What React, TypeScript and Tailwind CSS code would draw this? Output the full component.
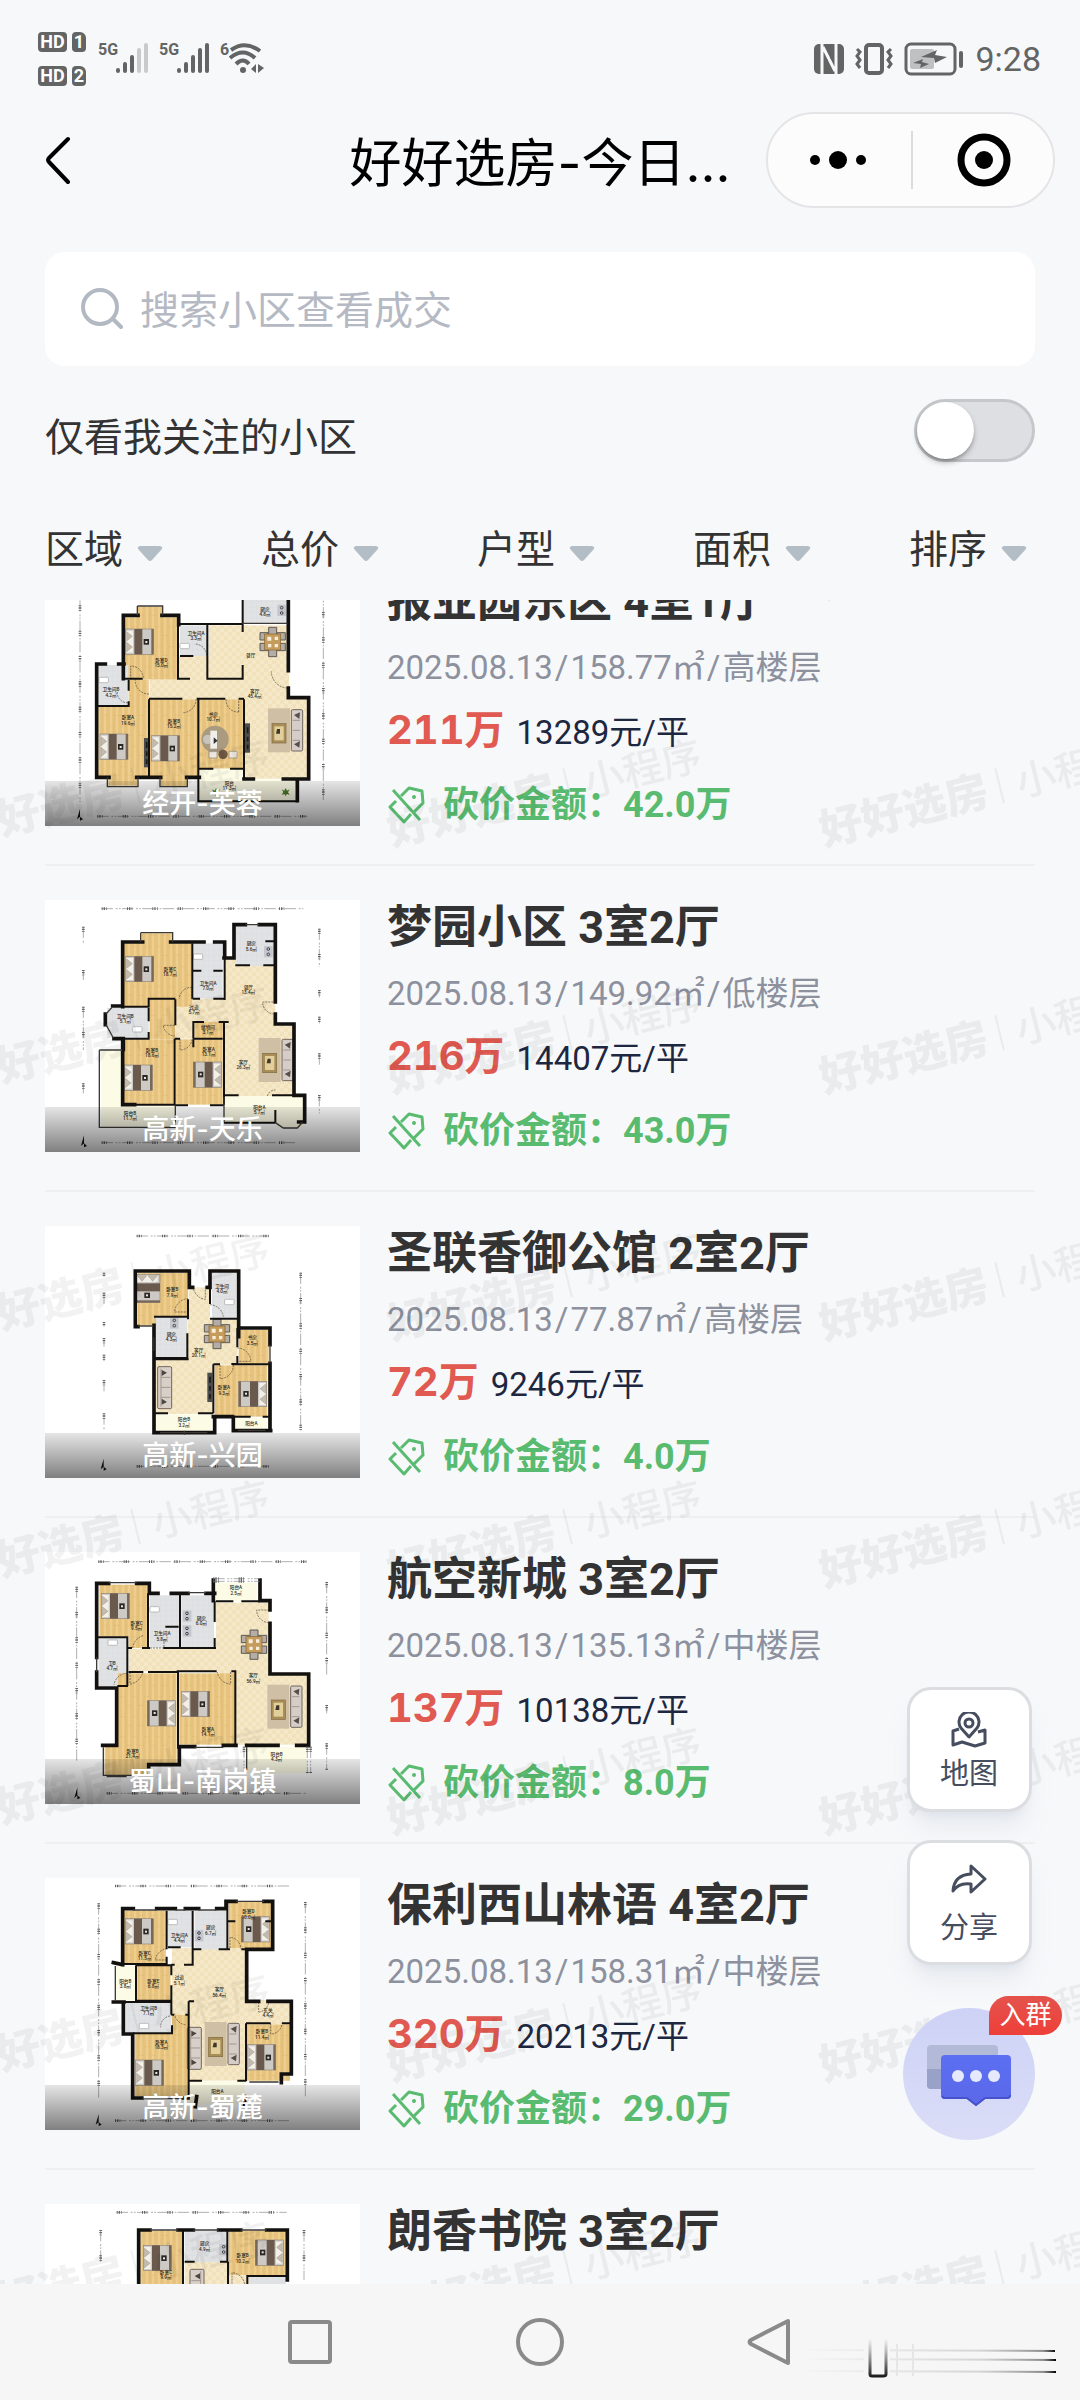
import {useLayoutEffect, useRef, useState} from 'react';

type RoomKind = 'wood' | 'tile' | 'bath' | 'balcony';
type FurnitureKind = 'bed' | 'sofa' | 'dining' | 'rug' | 'toilet' | 'tv' | 'desk' | 'stove' | 'plant';

interface Plan {
    top: number; // origem vertical do viewBox
    rooms: [RoomKind, number, number, number, number][];
    walls: string;
    inner: string;
    thin?: string;
    doors: string;
    furniture: [FurnitureKind, number, number, number?][];
    labels: [string, string, number, number][];
    dims: string;
    north?: [number, number];
}

interface Listing {
    id: number;
    name: string;
    area: string;
    date?: string;
    size?: string;
    floor?: string;
    price?: string;
    unitPrice?: string;
    bargain?: string;
    plan: Plan;
}

const roomFill: Record<RoomKind, string> = {
    wood: 'url(#wood)',
    tile: 'url(#tile)',
    bath: 'url(#bath)',
    balcony: '#fcfbe6',
};

const listings: Listing[] = [
    {
        id: 1,
        name: '报业园东区 4室1厅',
        area: '经开-芙蓉',
        date: '2025.08.13',
        size: '158.77㎡',
        floor: '高楼层',
        price: '211万',
        unitPrice: '13289元/平',
        bargain: '42.0万',
        plan: {
            top: -18,
            rooms: [
                ['tile', 449, 230, 418, 128], ['tile', 626, 136, 238, 222], ['tile', 732, 270, 130, 90],
                ['tile', 732, 356, 192, 240], ['tile', 536, 228, 90, 72], ['bath', 728, 40, 136, 92],
                ['wood', 372, 112, 160, 186], ['wood', 412, 80, 76, 36], ['bath', 540, 136, 84, 92],
                ['bath', 295, 255, 90, 122], ['wood', 386, 298, 60, 82], ['wood', 295, 378, 150, 212],
                ['wood', 325, 585, 86, 32], ['wood', 449, 358, 146, 232], ['wood', 482, 586, 80, 32],
                ['wood', 597, 358, 135, 208], ['balcony', 597, 566, 135, 98], ['balcony', 732, 598, 158, 66],
            ],
            walls: 'M370 296V106H414M486 106H536V134M865 40V272M865 324V353H926V597H850M760 597H732M290 592V252H316M356 252H372M290 592H327M410 592H482M560 592H598M892 600V662',
            inner: 'M536 132H728M728 40V156M728 255V296H622V134M622 228V296M540 228H580M534 134V296H570M386 300V332M386 364V378H292M372 296H428M447 358V590M447 356H547M590 356H676M716 356H732M595 358V664H892M732 358V597M597 566H640M690 566H732',
            thin: 'M412 78H488V106M412 78V106M322 592V620H414V592M480 592V620H562V592M727 130H862',
            doors: 'M392 298V258A38 38 0 0 1 430 296M447 342A40 40 0 0 1 406 298M620 226A36 36 0 0 0 584 192M862 324A50 50 0 0 1 814 274M588 358A40 40 0 0 1 548 398M716 396V358M716 396A36 36 0 0 1 678 358M384 368A30 30 0 0 1 352 336',
            furniture: [
                ['bed', 377, 147], ['bed', 300, 462], ['bed', 455, 467], ['dining', 818, 186], ['rug', 804, 385],
                ['toilet', 540, 190], ['toilet', 297, 292], ['tv', 735, 430], ['tv', 432, 474], ['desk', 645, 478],
                ['stove', 842, 78], ['plant', 857, 636], ['plant', 648, 636],
            ],
            labels: [
                ['厨房', '4.8㎡', 795, 92], ['卫生间A', '3.3㎡', 588, 165], ['卧室D', '15.0㎡', 484, 246],
                ['餐厅', '', 752, 230], ['卫生间B', '4.2㎡', 333, 334], ['客厅', '45.4㎡', 764, 338],
                ['卧室A', '19.6㎡', 384, 418], ['卧室B', '15.2㎡', 522, 428], ['书房', '10.7㎡', 640, 408],
                ['阳台', '11.3㎡', 688, 614],
            ],
            dims: 'M240 0V670M970 20V660M292 709H922',
            north: [240, 704],
        },
    },
    {
        id: 2,
        name: '梦园小区 3室2厅',
        area: '高新-天乐',
        date: '2025.08.13',
        size: '149.92㎡',
        floor: '低楼层',
        price: '216万',
        unitPrice: '14407元/平',
        bargain: '43.0万',
        plan: {
            top: 60,
            rooms: [
                ['tile', 526, 356, 300, 120], ['tile', 672, 235, 150, 250], ['tile', 672, 436, 208, 212],
                ['wood', 372, 190, 204, 190], ['wood', 424, 160, 92, 34], ['bath', 580, 190, 88, 166],
                ['bath', 706, 136, 116, 122], ['bath', 322, 384, 124, 90], ['wood', 449, 358, 76, 120],
                ['wood', 372, 478, 152, 194], ['wood', 584, 426, 84, 50], ['wood', 528, 478, 140, 196],
                ['balcony', 304, 512, 62, 232], ['balcony', 304, 676, 222, 68], ['balcony', 672, 648, 240, 78],
                ['balcony', 830, 690, 80, 52],
            ],
            walls: 'M368 380V186H428M512 186H612M644 186H674V234M702 234V134H736M778 134H826V366M826 402V432H882V646H914V726H896M338 378H368M342 476H370V508M368 476V674H404M316 402V434M672 234H702M702 168V210',
            inner: 'M577 190V356M580 272H604M640 272H668M674 234V360M368 380H446V356H526M526 358V436M446 384V424M446 456V476H370M524 476V676M578 356H600M640 356H672M580 476V426H612M656 426H686M524 476H540M580 476H668M672 426V674M524 676H564M630 676H672M368 674H524M672 646H716M816 646H880M706 256H750M790 256H822M796 184H822M826 690V728M672 728H826M580 478V502',
            thin: 'M422 158H518V186M422 158V186M298 510V742H526V676M298 510H366M318 402L338 380M318 434L340 474M826 728L850 744H892L908 726M736 134H778M672 650V728',
            doors: 'M576 358V322A36 36 0 0 0 538 356M820 366H788A36 36 0 0 0 820 402M524 436H490A36 36 0 0 0 524 468M540 476V510A36 36 0 0 0 576 478M802 648A24 24 0 0 1 826 630',
            furniture: [
                ['bed', 377, 229], ['bed', 373, 555], ['bed', 664, 622, 180], ['toilet', 580, 222], ['toilet', 398, 440],
                ['rug', 776, 474], ['stove', 802, 202],
            ],
            labels: [
                ['厨房', '5.6㎡', 754, 196], ['卧室C', '18.7㎡', 510, 272], ['卫生间A', '7.0㎡', 624, 314],
                ['餐厅', '13.4㎡', 745, 326], ['过道', '5.7㎡', 582, 386], ['卫生间B', '5.1㎡', 376, 414],
                ['储物间', '3.1㎡', 624, 446], ['卧室B', '18.6㎡', 456, 516], ['卧室A', '13.1㎡', 626, 512],
                ['客厅', '26.3㎡', 730, 552], ['阳台B', '11.7㎡', 390, 704], ['阳台A', '5.7㎡', 778, 686],
            ],
            dims: 'M305 86H910M250 140V190M250 270V300M250 380V510M250 610V640M958 146V260M958 330V352M958 410V430M958 520V560M958 645V700M305 788H885',
            north: [252, 784],
        },
    },
    {
        id: 3,
        name: '圣联香御公馆 2室2厅',
        area: '高新-兴园',
        date: '2025.08.13',
        size: '77.87㎡',
        floor: '高楼层',
        price: '72万',
        unitPrice: '9246元/平',
        bargain: '4.0万',
        plan: {
            top: 78,
            rooms: [
                ['tile', 566, 262, 64, 380], ['tile', 468, 478, 170, 164], ['tile', 564, 360, 148, 134],
                ['wood', 414, 218, 150, 130], ['wood', 414, 340, 54, 36], ['bath', 468, 352, 94, 120],
                ['bath', 636, 218, 74, 136], ['wood', 716, 390, 90, 102], ['wood', 644, 496, 158, 154],
                ['balcony', 468, 644, 168, 54], ['balcony', 708, 654, 92, 42],
            ],
            walls: 'M406 380V213H568V262M406 380H414M568 262H578M622 262H630V213H716V384H810V434M716 384V410M810 490V692M462 376V698H480M640 650H696M462 698H644V652M700 652V692H812M462 376V412M652 213H660',
            inner: 'M462 350H566M564 298V358M562 400V474H462M630 262V312M630 356H712M712 384V442M712 468V492H694M640 493H660M640 493V640M462 478H566M462 640H504M594 640H640M700 650H752M788 650H806M696 493H806',
            thin: 'M414 378H460M459 412V452M466 412V452M480 698H622M553 692V704M810 434V490M714 691H796',
            doors: 'M566 336H524A42 42 0 0 1 564 296M616 260V298A40 40 0 0 1 580 262M630 314A42 42 0 0 1 670 350M712 444A40 40 0 0 1 752 484H714M660 495V536A40 40 0 0 0 700 495',
            furniture: [
                ['bed', 480, 224, 90], ['bed', 800, 620, 180], ['dining', 651, 402], ['sofa', 515, 626, 180],
                ['tv', 622, 518], ['toilet', 674, 298], ['stove', 520, 356],
            ],
            labels: [
                ['卧室B', '7.9㎡', 517, 274], ['卫生间', '4.0㎡', 666, 264], ['厨房', '4.3㎡', 514, 408],
                ['客厅', '20.1㎡', 596, 456], ['书房', '3.5㎡', 757, 418], ['卧室A', '9.3㎡', 672, 568],
                ['阳台B', '3.2㎡', 552, 664], ['阳台A', '', 754, 676],
            ],
            dims: 'M410 108H806M312 218V230M312 278V314M312 366V380M312 414V440M312 464V484M312 540V576M312 640V692M902 218V692M410 799H806',
            north: [311, 794],
        },
    },
    {
        id: 4,
        name: '航空新城 3室2厅',
        area: '蜀山-南岗镇',
        date: '2025.08.13',
        size: '135.13㎡',
        floor: '中楼层',
        price: '137万',
        unitPrice: '10138元/平',
        bargain: '8.0万',
        plan: {
            top: 66,
            rooms: [
                ['tile', 386, 356, 424, 68], ['tile', 648, 218, 158, 426], ['tile', 706, 436, 216, 208],
                ['wood', 298, 164, 144, 156], ['wood', 386, 316, 58, 38], ['bath', 449, 196, 88, 158],
                ['bath', 544, 196, 98, 158], ['bath', 296, 324, 88, 144], ['wood', 354, 430, 176, 276],
                ['wood', 314, 650, 130, 86], ['wood', 538, 430, 168, 214], ['balcony', 648, 158, 122, 56],
                ['balcony', 742, 650, 178, 80],
            ],
            walls: 'M326 160H290V382M290 426V474H350V646H308M410 160H448V190H474M514 190H564M618 190H644M780 150V212H810V240M810 280V432H926V646H890M708 646H670M584 650H538V704H446V710M640 150V212M834 646H740',
            inner: 'M290 322H382V468M444 190V354M384 354H396M426 354H450M490 354H648M540 190V354M644 212V276M644 324V354M496 290H536M386 426H430M444 426H534V656M530 424H650M694 424H706V646M648 214H700M724 214H780M384 468H352',
            thin: 'M326 158H410M310 652V736H446M290 382V426M564 188H618M584 652H670M320 740H380M740 650V720',
            doors: 'M398 354A44 44 0 0 1 432 316M390 426V462A44 44 0 0 0 428 426M382 430A40 40 0 0 0 342 464M808 240H770A38 38 0 0 0 804 278M692 426V462A42 42 0 0 1 652 426M450 354H492V326',
            furniture: [
                ['bed', 304, 190], ['bed', 526, 588, 180], ['bed', 545, 484], ['dining', 762, 344], ['rug', 802, 464],
                ['toilet', 450, 230], ['toilet', 324, 330], ['stove', 558, 245], ['stove', 558, 290],
            ],
            labels: [
                ['阳台A', '2.5㎡', 708, 178], ['厨房', '6.0㎡', 604, 270], ['卧室C', '9.5㎡', 410, 284],
                ['卫生间A', '5.8㎡', 486, 316], ['卫B', '4.7㎡', 336, 404], ['客厅', '56.9㎡', 760, 442],
                ['卧室A', '14.1㎡', 624, 602], ['卧室B', '21.4㎡', 398, 668], ['阳台B', '4.3㎡', 830, 678],
            ],
            dims: 'M295 95H920M230 170V700M980 156V440M980 525V550M980 640V720M320 790H920M640 146H780M640 154H780M732 650V730M922 650V730M932 650V730',
            north: [232, 790],
        },
    },
    {
        id: 5,
        name: '保利西山林语 4室2厅',
        area: '高新-蜀麓',
        date: '2025.08.13',
        size: '158.31㎡',
        floor: '中楼层',
        price: '320万',
        unitPrice: '20213元/平',
        bargain: '29.0万',
        plan: {
            top: 54,
            rooms: [
                ['tile', 516, 264, 220, 160], ['tile', 568, 420, 302, 242], ['tile', 516, 420, 52, 44],
                ['wood', 372, 152, 126, 160], ['bath', 504, 152, 72, 110], ['bath', 584, 152, 94, 116],
                ['wood', 686, 126, 128, 138], ['balcony', 346, 318, 62, 104], ['wood', 412, 318, 100, 104],
                ['bath', 376, 428, 138, 90], ['wood', 404, 520, 160, 188], ['wood', 516, 464, 48, 60],
                ['wood', 740, 494, 130, 168], ['balcony', 568, 664, 166, 70],
            ],
            walls: 'M400 146H368V314M370 520V428M370 522H398V714H426M470 146H526M556 146H596M650 146H678V124H708M792 124H818V268H740V424H776M804 424H874V642H844V668M548 714H564M368 314L340 308M340 426H372M590 710L586 740M734 734V710',
            inner: 'M500 152V268M500 290V312H370M578 152V268M504 262H542M578 268H604M656 268H690M682 124V268M682 184H706M796 184H816M724 268H740M408 316V422H516M408 316H514V346M514 376V464M552 314H578V262M514 314H524M514 464H522M556 464H564M566 424V664M566 424H582M372 426H514M400 520H516V496M738 490H812M846 490H872M738 490V664M566 662H606M712 662H738M566 664V714',
            thin: 'M400 150H470M526 150H556M596 150H650M708 124H792M748 666H836M426 716H548M346 318V424',
            doors: 'M500 300H466A40 40 0 0 1 500 266M510 468A32 32 0 0 0 482 502M524 460A36 36 0 0 0 556 494M690 264V232A34 34 0 0 1 722 266M776 426V456M776 456A32 32 0 0 0 806 426M812 490V522A34 34 0 0 0 846 490',
            furniture: [
                ['bed', 376, 176], ['bed', 808, 246, 180], ['bed', 407, 600], ['bed', 743, 554], ['toilet', 504, 178],
                ['toilet', 418, 490], ['sofa', 604, 628, 180], ['rug', 614, 486], ['stove', 594, 214],
            ],
            labels: [
                ['卧室D', '10.0㎡', 745, 160], ['厨房', '6.7㎡', 632, 208], ['卫生间A', '4.4㎡', 538, 230],
                ['卧室C', '11.5㎡', 434, 284], ['阳台B', '3.8㎡', 376, 368], ['卧室E', '6.8㎡', 460, 368],
                ['过道', '5.1㎡', 538, 358], ['客厅', '56.4㎡', 658, 394], ['卫生间B', '7.1㎡', 446, 450],
                ['玄关', '4.4㎡', 804, 456], ['卧室A', '18.3㎡', 484, 552], ['卧室B', '11.4㎡', 786, 520],
                ['阳台A', '', 652, 698],
            ],
            dims: 'M345 78H872M296 130V720M916 126V716M345 782H872',
            north: [296, 780],
        },
    },
    {
        id: 6,
        name: '朗香书院 3室2厅',
        area: '',
        plan: {
            top: 72,
            rooms: [
                ['wood', 421, 152, 126, 300], ['bath', 554, 152, 126, 94], ['tile', 554, 246, 130, 200],
                ['wood', 686, 152, 172, 134], ['bath', 746, 288, 112, 100], ['tile', 686, 286, 60, 140],
            ],
            walls: 'M450 150H416V400M534 150H580M656 150H722M800 150H862V300',
            inner: 'M549 150V400M554 245H584M660 245H682V150M684 245V400M742 400V288H862',
            thin: 'M450 150H534M580 150H656M722 150H800',
            doors: 'M696 320V278A40 40 0 0 1 734 316',
            furniture: [['bed', 430, 196], ['bed', 850, 256, 180], ['stove', 668, 195], ['sofa', 570, 268]],
            labels: [['厨房', '4.9㎡', 614, 196], ['卧室B', '10.2㎡', 728, 232], ['卧室C', '9.9㎡', 498, 282]],
            dims: 'M350 97H860M302 150V250M912 150V300',
        },
    },
];

function Furniture({kind, x, y, rotate = 0}: {kind: FurnitureKind; x: number; y: number; rotate?: number}) {
    return (
        <g transform={`translate(${x} ${y}) rotate(${rotate})`}>
            {kind === 'bed' && (
                <>
                    <rect width="84" height="76" fill="#cdc9c4" stroke="#8f8579" strokeWidth="2"/>
                    <rect x="2" y="5" width="20" height="66" fill="#f3f0ea"/>
                    <path d="M3 8L20 22L3 36ZM3 40L20 54L3 68Z" fill="#c4bbae" stroke="#857a6b"/>
                    <rect x="26" width="24" height="76" fill="#6a5a4d"/>
                    <rect x="77" width="7" height="76" fill="#78685a"/>
                    <rect x="54" y="30" width="16" height="17" fill="#2a2725"/>
                    <rect x="59" y="36" width="6" height="6" fill="#e9e6e1"/>
                </>
            )}
            {kind === 'sofa' && (
                <>
                    <rect width="42" height="126" rx="4" fill="#d8cfc8" stroke="#71675e" strokeWidth="3"/>
                    <path d="M4 34H32M4 64H32M4 94H32M32 6V120" stroke="#877b71" strokeWidth="2" fill="none"/>
                    <path d="M30 12L14 20L30 30ZM30 98L14 108L30 116Z" fill="#4c4540"/>
                </>
            )}
            {kind === 'rug' && (
                <>
                    <rect width="66" height="132" fill="#cfbfa5"/>
                    <rect x="12" y="46" width="42" height="58" fill="#a88d57" stroke="#7f6a3f" strokeWidth="2"/>
                    <rect x="19" y="54" width="28" height="42" fill="#e2cf9b"/>
                    <path d="M27 62H36V76H24Z" fill="#3f3728"/>
                    <rect x="70" y="4" width="34" height="124" rx="4" fill="#d6cdc8" stroke="#71675e" strokeWidth="3"/>
                    <path d="M74 36H96M74 66H96M74 96H96" stroke="#877b71" strokeWidth="2"/>
                    <path d="M96 12L78 20L94 32ZM96 98L78 108L94 118Z" fill="#574e49"/>
                </>
            )}
            {kind === 'dining' && (
                <>
                    <path d="M-12 -44H12V44H-12ZM-38 -28H-14V-6H-38ZM14 -28H38V-6H14ZM-38 4H-14V26H-38ZM14 4H38V26H14Z" fill="#b3ada6" stroke="#5f5953" strokeWidth="3"/>
                    <rect x="-24" y="-24" width="48" height="48" fill="#c59c5c" stroke="#836433" strokeWidth="2"/>
                    <path d="M-16 -16H-4V-4H-16ZM6 -16H16V-6H6ZM-14 6H-4V16H-14ZM6 6H16V16H6Z" fill="#f6eddc"/>
                </>
            )}
            {kind === 'toilet' && <rect width="28" height="16" rx="2" fill="#fff" stroke="#a3a3a3" strokeWidth="2"/>}
            {kind === 'tv' && (
                <>
                    <rect width="15" height="88" fill="#4d4d4d"/>
                    <path d="M8 12V30M8 40V54M8 64V78" stroke="#1b1b1b" strokeWidth="5"/>
                </>
            )}
            {kind === 'desk' && (
                <>
                    <circle r="41" fill="#a99a80"/>
                    <circle cx="-22" r="14" fill="#c8c4bd"/>
                    <rect x="-14" y="-26" width="20" height="54" fill="#f1efea"/>
                    <path d="M-4 -6L8 4L-4 14Z" fill="#333"/>
                    <path d="M-18 36H6V56H-18ZM42 36H66V56H42Z" fill="#ece7df" stroke="#8b8378" strokeWidth="2"/>
                    <circle cx="24" cy="45" r="14" fill="#6f5844"/>
                </>
            )}
            {kind === 'stove' && (
                <>
                    <rect x="-10" y="-4" width="26" height="34" fill="#c3c6ce"/>
                    <circle cx="3" cy="5" r="4" fill="none" stroke="#444" strokeWidth="3"/>
                    <circle cx="3" cy="21" r="4" fill="none" stroke="#444" strokeWidth="3"/>
                </>
            )}
            {kind === 'plant' && (
                <path d="M0 -12L4 -4L12 -8L7 1L12 9L3 6L0 13L-4 6L-12 9L-7 0L-12 -8L-4 -4Z" fill="#4f7a26"/>
            )}
        </g>
    );
}

function FloorPlan({plan}: {plan: Plan}) {
    return (
        <svg viewBox={`135 ${plan.top} 945 756`} className="block w-full h-full" aria-hidden="true">
            {plan.rooms.map(([kind, x, y, w, h], i) => (
                <rect key={i} x={x} y={y} width={w} height={h} fill={roomFill[kind]}/>
            ))}
            <path d={plan.doors} fill="none" stroke="#4c4637" strokeWidth="2" strokeDasharray="6 3"/>
            {plan.furniture.map(([kind, x, y, rotate], i) => (
                <Furniture key={i} kind={kind} x={x} y={y} rotate={rotate}/>
            ))}
            <path d={plan.walls} fill="none" stroke="#12110f" strokeWidth="11" strokeLinecap="square"/>
            <path d={plan.inner} fill="none" stroke="#12110f" strokeWidth="6"/>
            {plan.thin && <path d={plan.thin} fill="none" stroke="#3c3b38" strokeWidth="4"/>}
            <path d={plan.dims} fill="none" stroke="#888" strokeWidth="2" strokeDasharray="34 8 6 4 5 4"/>
            <path d={plan.dims} fill="none" stroke="#666" strokeWidth="8" strokeDasharray="3 3 4 4 2 60"/>
            {plan.labels.map(([name, size, x, y], i) => (
                <text key={i} x={x} y={y} textAnchor="middle" fontSize="14" fontWeight="500" fill="#2d2920">
                    {name}
                    {size && <tspan x={x} dy="16">{size}</tspan>}
                </text>
            ))}
            {plan.north && (
                <path
                    d="M0 18V-18L-9 14L0 6L9 14Z"
                    transform={`translate(${plan.north[0]} ${plan.north[1]})`}
                    fill="#161616"
                />
            )}
        </svg>
    );
}

// Texturas compartilhadas por todas as plantas
function PlanTextures() {
    return (
        <svg className="absolute w-0 h-0" aria-hidden="true">
            <defs>
                <pattern id="wood" width="36" height="60" patternUnits="userSpaceOnUse">
                    <rect width="36" height="60" fill="#e6c27c"/>
                    <path d="M9 0V60M27 0V60" stroke="#eece8e" strokeWidth="7"/>
                    <path d="M18 0V60M0 20H18M18 46H36" stroke="#dab36a" strokeWidth="1"/>
                </pattern>
                <pattern id="tile" width="24" height="24" patternUnits="userSpaceOnUse">
                    <rect width="24" height="24" fill="#f4e8c8"/>
                    <path d="M0 0H12V12H0ZM12 12H24V24H12Z" fill="#f2e2bc"/>
                </pattern>
                <pattern id="bath" width="16" height="16" patternUnits="userSpaceOnUse">
                    <rect width="16" height="16" fill="#e0e2e4"/>
                    <path d="M0 0H16M0 0V16" stroke="#d4d6d9" strokeWidth="1"/>
                </pattern>
            </defs>
        </svg>
    );
}

function SignalBars({weak = false}: {weak?: boolean}) {
    const faded = weak ? '#c9cacb' : '#636464';
    return (
        <svg viewBox="0 0 33 32" className="w-[33px] h-8" fill="none" strokeWidth="4" strokeLinecap="round">
            <path d="M2 28V29M9 22V29M16 15V29" stroke="#636464"/>
            <path d="M23 8V29M30 3V29" stroke={faded}/>
        </svg>
    );
}

function HdBadge({sim}: {sim: string}) {
    return (
        <div className="flex gap-[5px] text-white font-bold text-lg leading-5">
            <span className="w-[29px] h-5 rounded-sm bg-[#636464] text-center">HD</span>
            <span className="w-[14px] h-5 rounded-sm rounded-tr-md bg-[#636464] text-center">{sim}</span>
        </div>
    );
}

function StatusBar() {
    return (
        <div className="flex items-start justify-between h-28 pl-[38px] pr-[39px] pt-8 text-[#636464]">
            <div className="flex items-start">
                <div className="flex flex-col gap-[14px]">
                    <HdBadge sim="1"/>
                    <HdBadge sim="2"/>
                </div>
                <div className="flex items-start pt-[10px] pl-3 font-bold text-base leading-4">
                    <span className="w-[18px]">5G</span>
                    <SignalBars weak/>
                    <span className="w-[18px] ml-[10px]">5G</span>
                    <SignalBars/>
                    <span className="w-[9px] ml-[10px]">6</span>
                    <svg viewBox="0 0 36 32" className="w-9 h-8" fill="none" stroke="#636464" strokeWidth="4">
                        <path d="M2 8Q16 -2 31 9M1 16Q14 5 26 16M7 22Q14 15 20 22"/>
                        <circle cx="14" cy="28" r="3" fill="#636464" stroke="none"/>
                        <path d="M22 27L27 22V31ZM29 22L35 26L29 31Z" fill="#636464" stroke="none"/>
                    </svg>
                </div>
            </div>
            <div className="flex items-center gap-[11px] pt-[10px]">
                <svg viewBox="0 0 30 32" className="w-[30px] h-8">
                    <rect y="1" width="30" height="30" rx="5" fill="#636464"/>
                    <path d="M8 1V31M9 4L21 28M22 1V31" stroke="#f7f8fa" strokeWidth="3" fill="none"/>
                    <path d="M12 16V29M18 3V16" stroke="#636464" strokeWidth="3"/>
                </svg>
                <svg viewBox="0 0 38 32" className="w-[38px] h-8" fill="none" stroke="#636464" strokeWidth="3">
                    <rect x="11" y="2" width="16" height="28" rx="3" strokeWidth="4"/>
                    <path d="M2 6L5 9L2 13L5 17L2 21L5 25M36 6L33 9L36 13L33 17L36 21L33 25"/>
                </svg>
                <svg viewBox="0 0 60 34" className="w-[60px] h-[34px]">
                    <rect x="2" y="2" width="49" height="30" rx="5" fill="none" stroke="#636464" strokeWidth="3"/>
                    <rect x="6" y="7" width="24" height="20" rx="2" fill="#bfc0c1"/>
                    <path d="M17 15L33 8L31 13L43 15L31 21L30 16ZM9 21L19 17L18 20L25 22L16 26L17 22Z" fill="#636464"/>
                    <path d="M57 11V24" stroke="#636464" strokeWidth="4" strokeLinecap="round"/>
                </svg>
                <span className="text-[34px] leading-8">9:28</span>
            </div>
        </div>
    );
}

function NavBar() {
    return (
        <header className="grid grid-cols-[1fr_auto_1fr] items-center px-[25px] text-black">
            <button aria-label="返回" className="justify-self-start ml-5">
                <svg viewBox="0 0 26 48" className="w-[26px] h-12" fill="none" stroke="currentColor" strokeWidth="4" strokeLinecap="round" strokeLinejoin="round">
                    <path d="M23 3L4 22Q2 24 4 26L23 46"/>
                </svg>
            </button>
            <h1 className="pt-2 text-[52px] leading-[64px] font-['Inter','Noto_Sans_CJK_SC',sans-serif]">好好选房-今日...</h1>
            <div className="justify-self-end flex items-center justify-between h-24 w-[289px] px-[42px] rounded-full border-2 border-[#e5e5e7] bg-[#fcfcfd]">
                <button aria-label="更多">
                    <svg viewBox="0 0 56 20" className="w-14 h-5" fill="currentColor">
                        <circle cx="5" cy="10" r="5"/>
                        <circle cx="28" cy="10" r="9"/>
                        <circle cx="51" cy="10" r="5"/>
                    </svg>
                </button>
                <span className="w-[2px] h-[58px] bg-[#dcdcde]"/>
                <button aria-label="关闭">
                    <svg viewBox="0 0 54 54" className="w-[54px] h-[54px]">
                        <circle cx="27" cy="27" r="23" fill="none" stroke="currentColor" strokeWidth="7"/>
                        <circle cx="27" cy="27" r="9" fill="currentColor"/>
                    </svg>
                </button>
            </div>
        </header>
    );
}

function BargainIcon() {
    return (
        <svg viewBox="0 0 38 38" className="w-[38px] h-[38px]" fill="none" stroke="currentColor" strokeWidth="3" strokeLinejoin="round">
            <path d="M6 4L33 34"/>
            <path d="M14 10L22 2L35 5L36 17L26 27"/>
            <path d="M9 15L3 21L17 36L24 28"/>
            <circle cx="27" cy="11" r="2" fill="currentColor" stroke="none"/>
        </svg>
    );
}

function ListingRow({item}: {item: Listing}) {
    return (
        <li className="flex gap-[27px] pt-[34px] pb-[38px] border-b-2 border-[#eeeff1]">
            <div className="relative w-[315px] h-[252px] shrink-0 bg-white">
                <FloorPlan plan={item.plan}/>
                {item.area && (
                    <p className="absolute inset-x-0 bottom-0 bg-linear-to-b from-black/10 to-black/50 text-center text-white text-[27px] leading-[45px] font-medium font-['Inter','Noto_Sans_CJK_SC',sans-serif]">
                        {item.area}
                    </p>
                )}
            </div>
            <div className="flex-1 min-w-0">
                <h2 className="text-[45px] leading-14 font-bold text-[#333]">{item.name}</h2>
                {item.date && (
                    <p className="mt-4 flex gap-[2px] h-11 text-[33px] leading-11 text-[#8d919e]">
                        <span>{item.date}</span>
                        <span>/</span>
                        <span>{item.size}</span>
                        <span>/</span>
                        <span>{item.floor}</span>
                    </p>
                )}
                {item.price && (
                    <p className="mt-[14px] flex items-baseline gap-3 h-[52px] leading-[52px]">
                        <strong className="text-[40px] text-[#e05a51] tabular-nums font-['Inter','Noto_Sans_CJK_SC',sans-serif]">{item.price}</strong>
                        <span className="text-[33px] text-[#1d2740]">{item.unitPrice}</span>
                    </p>
                )}
                {item.bargain && (
                    <p className="mt-[31px] flex items-center gap-[18px] h-9 text-4xl leading-9 font-bold text-[#59bb70]">
                        <BargainIcon/>
                        <span>砍价金额：{item.bargain}</span>
                    </p>
                )}
            </div>
        </li>
    );
}

// Marca d'água repetida sobre a lista
function Watermark() {
    return (
        <svg className="absolute inset-0 w-full h-full pointer-events-none" aria-hidden="true">
            <defs>
                <pattern id="mark" x="-58" y="118" width="432" height="247" patternUnits="userSpaceOnUse">
                    <g transform="translate(18 128) rotate(-14)" fill="#000" fillOpacity="0.05">
                        <text fontSize="43" fontWeight="900">好好选房</text>
                        <rect x="184" y="-34" width="2" height="36"/>
                        <text x="202" fontSize="40" fontWeight="500">小程序</text>
                    </g>
                </pattern>
            </defs>
            <rect width="100%" height="100%" fill="url(#mark)"/>
        </svg>
    );
}

function FloatingActions() {
    return (
        <div className="absolute right-[45px] bottom-36 flex flex-col items-center text-[#464d5e]">
            <button className="w-[125px] h-[125px] pt-1 rounded-3xl border-3 border-[#dcdde1] bg-white shadow-xl shadow-slate-400/15 flex flex-col items-center justify-center gap-2">
                <svg viewBox="0 0 36 36" className="w-9 h-9" fill="none" stroke="currentColor" strokeWidth="3" strokeLinejoin="round">
                    <path d="M18 25L10 16A10 10 0 1 1 26 16Z"/>
                    <circle cx="18" cy="11" r="4"/>
                    <path d="M8 17L2 19V33L11 30L24 34L34 31V18L27 20"/>
                </svg>
                <span className="text-[29px] leading-9">地图</span>
            </button>
            <button className="mt-7 w-[125px] h-[125px] pt-1 rounded-3xl border-3 border-[#dcdde1] bg-white shadow-xl shadow-slate-400/15 flex flex-col items-center justify-center gap-4">
                <svg viewBox="0 0 36 30" className="w-9 h-[30px]" fill="none" stroke="currentColor" strokeWidth="3" strokeLinejoin="round">
                    <path d="M20 2L34 15L20 28V20Q8 18 2 27Q3 11 20 10Z"/>
                </svg>
                <span className="text-[29px] leading-9">分享</span>
            </button>
            <button className="relative mt-[43px] w-[132px] h-[132px] rounded-full bg-linear-to-b from-[#cdd2f6] to-[#dbddf7] flex items-center justify-center">
                <svg viewBox="0 0 132 132" className="w-full h-full" aria-hidden="true">
                    <defs>
                        <linearGradient id="bubble" x1="0" y1="0" x2="0" y2="1">
                            <stop offset="0" stopColor="#5b6ff2"/>
                            <stop offset="1" stopColor="#5b68e8"/>
                        </linearGradient>
                    </defs>
                    <rect x="24" y="37" width="71" height="44" rx="4" fill="#b3bad8"/>
                    <path d="M24 61H40V81H28Q24 81 24 77Z" fill="#98a1c8"/>
                    <path d="M42 47H104Q108 47 108 51V87Q108 91 104 91H82L73 98L64 91H42Q38 91 38 87V51Q38 47 42 47Z" fill="url(#bubble)"/>
                    <path d="M39 88Q40 90 42 90H64L73 97L82 90H104Q107 90 107 87" fill="none" stroke="#4553cf" strokeWidth="2"/>
                    <circle cx="55" cy="68" r="6" fill="#e6e9fc"/>
                    <circle cx="73" cy="68" r="6" fill="#e6e9fc"/>
                    <circle cx="91" cy="68" r="6" fill="#e6e9fc"/>
                </svg>
                <span className="absolute -top-3 -right-[27px] w-[73px] rounded-full rounded-bl-sm bg-linear-to-b from-[#e4524c] to-[#ee3f39] text-white text-[26px] leading-[39px] text-center">
                    入群
                </span>
            </button>
        </div>
    );
}

function SystemNav() {
    return (
        <nav className="relative flex items-center justify-center gap-[182px] h-[116px] bg-[#f6f6f6] text-[#8a8a8a]">
            <button aria-label="最近任务">
                <svg viewBox="0 0 48 48" className="w-12 h-12" fill="none" stroke="currentColor" strokeWidth="4">
                    <rect x="4" y="4" width="40" height="40" rx="2"/>
                </svg>
            </button>
            <button aria-label="主页">
                <svg viewBox="0 0 48 48" className="w-12 h-12" fill="none" stroke="currentColor" strokeWidth="4">
                    <circle cx="24" cy="24" r="22"/>
                </svg>
            </button>
            <button aria-label="返回上一级">
                <svg viewBox="0 0 48 48" className="w-12 h-12" fill="none" stroke="currentColor" strokeWidth="4" strokeLinejoin="round">
                    <path d="M42 3V45L5 26Q2 24 5 22Z"/>
                </svg>
            </button>
            <svg viewBox="0 0 256 42" className="absolute right-6 bottom-5 w-64 h-[42px]" fill="none" aria-hidden="true">
                <defs>
                    <linearGradient id="streak" gradientUnits="userSpaceOnUse" x1="0" y1="0" x2="256" y2="0">
                        <stop offset="0" stopColor="#999" stopOpacity="0"/>
                        <stop offset="0.7" stopColor="#888" stopOpacity="0.3"/>
                        <stop offset="0.95" stopColor="#444" stopOpacity="0.6"/>
                        <stop offset="1" stopColor="#000"/>
                    </linearGradient>
                    <linearGradient id="cup" gradientUnits="userSpaceOnUse" x1="0" y1="0" x2="0" y2="40">
                        <stop offset="0" stopColor="#555" stopOpacity="0"/>
                        <stop offset="1" stopColor="#111"/>
                    </linearGradient>
                </defs>
                <path d="M0 12L255 13M0 21L256 22M0 33L256 34" stroke="url(#streak)" strokeWidth="2"/>
                <rect x="64" y="4" width="26" height="34" fill="#f6f6f6"/>
                <path d="M70 2V36Q70 38 72 38H83Q86 38 86 36V2" stroke="url(#cup)" strokeWidth="3"/>
                <path d="M97 6V38M113 6V38" stroke="#e6e6e6" strokeWidth="2"/>
            </svg>
        </nav>
    );
}

export default function App() {
    const [keyword, setKeyword] = useState('');
    const [onlyFollowed, setOnlyFollowed] = useState(false);
    const listRef = useRef<HTMLUListElement>(null);

    // A lista abre já rolada um pouco
    useLayoutEffect(() => {
        if (listRef.current) listRef.current.scrollTop = 60;
    }, []);

    return (
        <div className="flex flex-col h-screen bg-[#f7f8fa] text-[#333] font-['Roboto','Noto_Sans_CJK_SC',sans-serif]">
            <PlanTextures/>
            <StatusBar/>
            <NavBar/>

            <div className="px-[45px] pt-11 pb-[26px]">
                <label className="flex items-center gap-[17px] h-[114px] pl-9 pr-6 rounded-[20px] bg-white">
                    <svg viewBox="0 0 42 42" className="w-[42px] h-[42px] shrink-0" fill="none" stroke="#b3b9c2" strokeWidth="4" strokeLinecap="round">
                        <circle cx="19" cy="19" r="17"/>
                        <path d="M33 32L40 39"/>
                    </svg>
                    <input
                        type="text"
                        aria-label="搜索小区"
                        placeholder="搜索小区查看成交"
                        value={keyword}
                        onChange={e => setKeyword(e.target.value)}
                        className="flex-1 min-w-0 pt-1 text-[39px] leading-12 outline-none placeholder:text-[#b5b9c3]"
                    />
                </label>

                <label className="mt-[33px] flex items-end justify-between">
                    <span className="text-[39px] leading-12">仅看我关注的小区</span>
                    <input
                        type="checkbox"
                        role="switch"
                        checked={onlyFollowed}
                        onChange={e => setOnlyFollowed(e.target.checked)}
                        className="appearance-none w-[121px] h-[63px] rounded-full border-3 border-[#c6c7ca] bg-[#dedfe3] before:block before:w-[57px] before:h-[57px] before:rounded-full before:bg-white before:shadow-md before:shadow-black/30 checked:bg-[#59bb70] checked:before:ml-[58px]"
                    />
                </label>

                <div className="mt-16 flex justify-between">
                    {['区域', '总价', '户型', '面积', '排序'].map(name => (
                        <button key={name} className="flex items-center gap-[14px] pr-2 text-[39px] leading-12">
                            {name}
                            <svg viewBox="0 0 26 16" className="w-[26px] h-4 mt-2" fill="#b3bdc5" aria-hidden="true">
                                <path d="M3 0H23Q27 1 24 4L15 14Q13 16 11 14L2 4Q-1 1 3 0Z"/>
                            </svg>
                        </button>
                    ))}
                </div>
            </div>

            <main className="relative flex-1 min-h-0">
                <ul ref={listRef} className="h-full px-[45px] overflow-y-auto [scrollbar-width:none]">
                    {listings.map(item => <ListingRow key={item.id} item={item}/>)}
                </ul>
                <Watermark/>
                <FloatingActions/>
            </main>

            <SystemNav/>
        </div>
    );
}
